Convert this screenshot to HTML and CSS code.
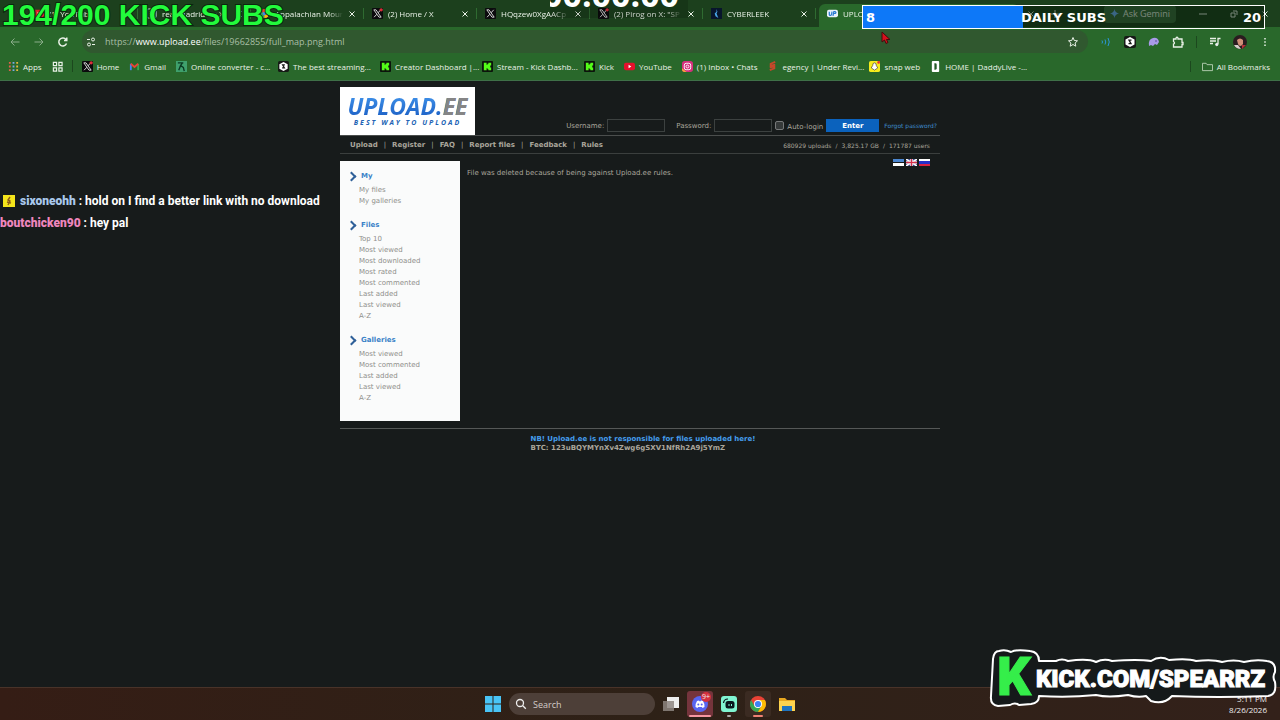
FILE: index.html
```html
<!DOCTYPE html>
<html lang="en">
<head>
    <meta charset="UTF-8">
    <meta name="viewport" content="width=device-width, initial-scale=1.0">
    <title>UPLOAD.EE - Best way to upload</title>
    <link rel="stylesheet" href="styles.css">
</head>
<body>
    <!-- shared icons -->
    <svg class="defs" width="0" height="0">
        <symbol id="x-logo" viewBox="0 0 12 12">
            <rect width="12" height="12" rx="1" fill="#0b0b0d"/>
            <path d="M2 2h2.4l5.6 8H7.600z" fill="none" stroke="#ddd" stroke-width="1"/>
            <path d="M9.500 2L6.600 5.300M5.300 6.800L2.300 10" stroke="#ddd" stroke-width="1"/>
        </symbol>
        <symbol id="x-new" viewBox="0 0 12 12">
            <use href="#x-logo"/>
            <circle cx="10" cy="2" r="1.800" fill="#d9303a"/>
        </symbol>
        <symbol id="kick" viewBox="0 0 12 12">
            <rect width="12" height="12" rx="1" fill="#0c140c"/>
            <path d="M2 2h3v2h1V3h1V2h3v3H9v1H8v0h1v1h1v3H7V9H6V8H5v2H2z" fill="#53fc18"/>
        </symbol>
        <symbol id="gem" viewBox="0 0 12 12">
            <rect width="12" height="12" rx="2" fill="#161a16" stroke="none"/>
            <path d="M6 1l4.500 2.500v5L6 11 1.500 8.500v-5z" fill="#fff" stroke="none"/>
            <path d="M7.500 4.200H5l2 3.400H4.500" fill="none" stroke="#161a16" stroke-width="1.300"/>
        </symbol>
        <symbol id="close" viewBox="0 0 8 8">
            <path d="M1.500 1.500l5 5M6.500 1.500l-5 5" stroke="currentColor" fill="none"/>
        </symbol>
    </svg>

    <header class="browser">
        <div class="tabs">
            <div class="tab">
                <svg class="icon" viewBox="0 0 12 12"><rect y="2" width="12" height="8" rx="2" fill="#e0202c"/><path d="M5 4l3 2-3 2z" fill="#fff"/></svg>
                <span>(1) YouTube</span>
            </div>
            <div class="tab">
                <svg class="icon" viewBox="0 0 12 12"><rect x="1" y="1" width="10" height="10" rx="2" fill="none" stroke="#ddd"/><path d="M4 4h4M4 6h4M4 8h2" stroke="#ddd"/></svg>
                <span>real madrid on X</span>
                <button aria-label="Close tab"><svg><use href="#close"/></svg></button>
            </div>
            <div class="tab">
                <svg class="icon" viewBox="0 0 12 12"><circle cx="6" cy="6" r="5" fill="#e94335"/><path d="M6 6L1.600 3.500A5 5 0 0 0 6 11z" fill="#34a853"/><path d="M6 6v5a5 5 0 0 0 5-5z" fill="#fbbc05"/><circle cx="6" cy="6" r="2" fill="#4285f4"/></svg>
                <span>Appalachian Moun</span>
                <button aria-label="Close tab"><svg><use href="#close"/></svg></button>
            </div>
            <div class="tab">
                <svg class="icon"><use href="#x-new"/></svg>
                <span>(2) Home / X</span>
                <button aria-label="Close tab"><svg><use href="#close"/></svg></button>
            </div>
            <div class="tab">
                <svg class="icon"><use href="#x-logo"/></svg>
                <span>HQqzew0XgAACp</span>
                <button aria-label="Close tab"><svg><use href="#close"/></svg></button>
            </div>
            <div class="tab">
                <svg class="icon"><use href="#x-new"/></svg>
                <span>(2) Pirog on X: "SP</span>
                <button aria-label="Close tab"><svg><use href="#close"/></svg></button>
            </div>
            <div class="tab">
                <svg class="icon" viewBox="0 0 12 12"><rect width="12" height="12" fill="#08152c"/><path d="M6 1l1 3-1 2 2 5-3-2-1-3 2-2z" fill="#49a6e8"/></svg>
                <span>CYBERLEEK</span>
                <button aria-label="Close tab"><svg><use href="#close"/></svg></button>
            </div>
            <div class="tab active">
                <svg class="icon" viewBox="0 0 12 12"><rect y="2" width="12" height="8" rx="2" fill="#e9f1fa"/><path d="M2.500 4v3q0 1 1 1t1.500-1l.5-3M6.500 8.500l1-4.500h1.500q1.500 1 0 2H7.500" fill="none" stroke="#2477d2" stroke-width="1.300"/></svg>
                <span>UPLOAD.EE</span>
            </div>
            <div class="tab-end">
                <button aria-label="Close tab"><svg><use href="#close"/></svg></button>
                <button aria-label="New tab"><svg viewBox="0 0 8 8"><path d="M4 0v8M0 4h8" stroke="currentColor"/></svg></button>
            </div>
            <div class="window-controls">
                <button class="gemini"><svg class="icon" viewBox="0 0 12 12"><path d="M6 0q.8 5.200 6 6-5.200.8-6 6-.8-5.200-6-6 5.200-.8 6-6z" fill="#6fb0ff"/></svg>Ask Gemini</button>
                <button aria-label="Minimize"><svg viewBox="0 0 8 8"><path d="M0 4h8" stroke="currentColor"/></svg></button>
                <button aria-label="Restore"><svg viewBox="0 0 8 8"><path d="M1 3h4v4H1zM3 1h4v4" fill="none" stroke="currentColor"/></svg></button>
                <button aria-label="Close"><svg><use href="#close"/></svg></button>
            </div>
        </div>

        <div class="toolbar">
            <button class="dim" aria-label="Back"><svg viewBox="0 0 12 12"><path d="M10.500 6H2M5.500 2.500L2 6l3.500 3.500"/></svg></button>
            <button class="dim" aria-label="Forward"><svg viewBox="0 0 12 12"><path d="M1.500 6H10M6.500 2.500L10 6 6.500 9.500"/></svg></button>
            <button aria-label="Reload"><svg viewBox="0 0 12 12"><path d="M9.500 7.500A4 4 0 1 1 9 3.500M9.800 1.500V4.500H7" stroke-width="1.500"/></svg></button>
            <div class="address">
                <svg class="site-info" viewBox="0 0 12 12"><path d="M2 3.500h3M7 8.500h3"/><circle cx="8" cy="3.500" r="1.500"/><circle cx="4" cy="8.500" r="1.500"/></svg>
                <div class="url">https://<b>www.upload.ee</b>/files/19662855/full_map.png.html</div>
                <svg viewBox="0 0 12 12"><path d="M6 1.500l1.300 3 3.200.3L8.100 7l.7 3.200L6 8.500l-2.800 1.700.7-3.200L1.500 4.800l3.200-.3z"/></svg>
            </div>
            <div class="extensions">
                <svg viewBox="0 0 12 12" class="blue"><path d="M2 4.500q1 1.500 0 3M5 3.500q1.500 2.500 0 5M8 2q2.500 4 0 8"/></svg>
                <svg><use href="#gem"/></svg>
                <svg viewBox="0 0 12 12"><path d="M1 10Q0 3 5 2q5-1 6 4l-2 3-2-1-2 2-2-1z" fill="#a99be8" stroke="none"/><path d="M7 5h2" stroke="#5b4aa0"/></svg>
                <svg viewBox="0 0 12 12"><path d="M1.500 3H4V2q1-1.500 2 0v1h4v3.500h1v2h-1v2.500H1.500V8q2-1 0-2.500z" stroke-width="1.300"/></svg>
                <i></i>
                <svg viewBox="0 0 12 12"><path d="M1 2.500h6M1 5h6M1 7.500h3M9 8V2.500h2.500" stroke-width="1.300"/><circle cx="7.800" cy="8.500" r="1.200" fill="#eef"/></svg>
                <svg class="avatar" viewBox="0 0 14 14"><circle cx="7" cy="7" r="7" fill="#2a1c20"/><path d="M4 5q3-3 6 0v4q-3 4-5 0z" fill="#cf9078"/><path d="M1 10l4 0 3 4q-5 0-7-4z" fill="#d8d0cc"/><path d="M9 10l4 0-4 4z" fill="#b4323a"/></svg>
                <svg viewBox="0 0 12 12"><path d="M6 2v1.500M6 5.300v1.500M6 8.600v1.500" stroke-width="1.500"/></svg>
            </div>
        </div>

        <nav class="bookmarks">
            <a href="#"><svg viewBox="0 0 12 12"><path d="M1 2h2M1 6h2M1 10h2" stroke="#e5604b" stroke-width="2"/><path d="M5 2h2M5 6h2M5 10h2" stroke="#77a9e8" stroke-width="2"/><path d="M9 2h2M9 6h2M9 10h2" stroke="#e7b73c" stroke-width="2"/></svg>Apps</a>
            <a href="#" aria-label="Tab groups"><svg viewBox="0 0 12 12"><path d="M1.500 1.500h3.500v3.500H1.500zM7.500 1.500h3.500v3.500H7.500zM1.500 7.500h3.500v3.500H1.500zM7.500 7.500h3.500v3.500H7.500z" fill="none" stroke="#e9f1e7" stroke-width="1.300"/></svg></a>
            <i></i>
            <a href="#"><svg><use href="#x-new"/></svg>Home</a>
            <a href="#"><svg viewBox="0 0 12 12"><path d="M2 10V3" stroke="#4285f4" stroke-width="2"/><path d="M10 10V3" stroke="#34a853" stroke-width="2"/><path d="M2 3l4 3.500L10 3" fill="none" stroke="#ea4335" stroke-width="2"/></svg>Gmail</a>
            <a href="#" class="long"><svg viewBox="0 0 12 12"><rect width="12" height="12" fill="#3fa06c"/><path d="M2 2h6M7 2L5 5l3 2 1 4M5 5l-2 5" fill="none" stroke="#0b3a22" stroke-width="1.500"/></svg>Online converter - c...</a>
            <a href="#" class="long"><svg><use href="#gem"/></svg>The best streaming...</a>
            <a href="#" class="long"><svg><use href="#kick"/></svg>Creator Dashboard |...</a>
            <a href="#" class="long"><svg><use href="#kick"/></svg>Stream - Kick Dashb...</a>
            <a href="#"><svg><use href="#kick"/></svg>Kick</a>
            <a href="#"><svg viewBox="0 0 12 12"><rect y="2" width="12" height="8" rx="2" fill="#e5102c"/><path d="M5 4l3 2-3 2z" fill="#fff"/></svg>YouTube</a>
            <a href="#"><svg viewBox="0 0 12 12"><rect width="12" height="12" rx="3" fill="#d52f7c"/><path d="M0 8l5 4H3q-3 0-3-3z" fill="#f9a63a"/><rect x="2.500" y="2.500" width="7" height="7" rx="2" fill="none" stroke="#fff"/><circle cx="6" cy="6" r="1.600" fill="none" stroke="#fff"/></svg>(1) Inbox • Chats</a>
            <a href="#" class="long"><svg viewBox="0 0 12 12"><path d="M9 1L4 3v2l5-1M3 7l5-1v2L3 10" fill="none" stroke="#c5472a" stroke-width="2"/></svg>egency | Under Revi...</a>
            <a href="#"><svg viewBox="0 0 12 12"><rect width="12" height="12" rx="2" fill="#f6ec1c"/><path d="M6 2q2 0 2 3l1.500 2.500L6 10 2.500 7.500 4 5q0-3 2-3z" fill="#fff" stroke="#333" stroke-width=".7"/><circle cx="10.500" cy="1.500" r="1.500" fill="#e33"/></svg>snap web</a>
            <a href="#"><svg viewBox="0 0 12 12"><rect x="2" y="0" width="8" height="12" rx="1" fill="#fff"/><path d="M4.800 2.500v7h1q1.500 0 1.500-1.500V4q0-1.500-1.500-1.500z" fill="#245c27"/></svg>HOME | DaddyLive -...</a>
            <a href="#" class="all"><svg viewBox="0 0 12 12"><path d="M.5 10.500v-8h4l1 1.500h6v6.500z" fill="none" stroke="#b9d0b6"/></svg>All Bookmarks</a>
        </nav>
    </header>

    <main class="site">
        <div class="top">
            <a href="#" class="logo">
                <span class="name">UPLOAD.<em>EE</em></span>
                <span class="slogan">BEST WAY TO UPLOAD</span>
            </a>
            <form class="login">
                <label for="user">Username:</label>
                <input type="text" id="user">
                <label for="pass" class="pass">Password:</label>
                <input type="password" id="pass">
                <input type="checkbox" id="auto">
                <label for="auto" class="auto">Auto-login</label>
                <button type="button">Enter</button>
                <a href="#">Forgot password?</a>
            </form>
        </div>
        <div class="menu">
            <nav>
                <a href="#">Upload</a><span>|</span><a href="#">Register</a><span>|</span><a href="#">FAQ</a><span>|</span><a href="#">Report files</a><span>|</span><a href="#">Feedback</a><span>|</span><a href="#">Rules</a>
            </nav>
            <div class="stats"><span>680929 uploads</span><span>/</span><span>3,825.17 GB</span><span>/</span><span>171787 users</span></div>
        </div>

        <div class="columns">
            <aside>
                <h2>My</h2>
                <ul>
                    <li><a href="#">My files</a></li>
                    <li><a href="#">My galleries</a></li>
                </ul>
                <h2>Files</h2>
                <ul>
                    <li><a href="#">Top 10</a></li>
                    <li><a href="#">Most viewed</a></li>
                    <li><a href="#">Most downloaded</a></li>
                    <li><a href="#">Most rated</a></li>
                    <li><a href="#">Most commented</a></li>
                    <li><a href="#">Last added</a></li>
                    <li><a href="#">Last viewed</a></li>
                    <li><a href="#">A-Z</a></li>
                </ul>
                <h2>Galleries</h2>
                <ul>
                    <li><a href="#">Most viewed</a></li>
                    <li><a href="#">Most commented</a></li>
                    <li><a href="#">Last added</a></li>
                    <li><a href="#">Last viewed</a></li>
                    <li><a href="#">A-Z</a></li>
                </ul>
            </aside>
            <p class="message">File was deleted because of being against Upload.ee rules.</p>
            <div class="flags">
                <svg viewBox="0 0 11 7"><rect width="11" height="7" fill="#fff"/><rect width="11" height="4" fill="#171b1b"/><rect width="11" height="3" fill="#4b86d0"/></svg>
                <svg viewBox="0 0 11 7"><rect width="11" height="7" fill="#3c4a8c"/><path d="M0 0l11 7M11 0L0 7" stroke="#fff" stroke-width="1.500"/><path d="M5.500 0v7M0 3.500h11" stroke="#fff" stroke-width="2.500"/><path d="M5.500 0v7M0 3.500h11" stroke="#d3304b" stroke-width="1.300"/></svg>
                <svg viewBox="0 0 11 7"><rect width="11" height="7" fill="#fff"/><rect y="2" width="11" height="3" fill="#2530c8"/><rect y="5" width="11" height="2" fill="#d92240"/></svg>
            </div>
        </div>

        <footer>
            <div>
                <a href="#">NB! Upload.ee is not responsible for files uploaded here!</a>
                <p>BTC: 123uBQYMYnXv4Zwg6gSXV1NfRh2A9j5YmZ</p>
            </div>
        </footer>
    </main>

    <div class="taskbar">
        <button aria-label="Start"><svg viewBox="0 0 16 16"><path d="M0 0h7.500v7.500H0zM8.500 0H16v7.500H8.500zM0 8.500h7.500V16H0zM8.500 8.500H16V16H8.500z" fill="#49c4f6"/></svg></button>
        <div class="search">
            <svg viewBox="0 0 12 12"><circle cx="5" cy="5" r="3.500" fill="none" stroke="#eee" stroke-width="1.300"/><path d="M7.800 7.800l3 3" stroke="#eee" stroke-width="1.300"/></svg>
            <input type="text" placeholder="Search" aria-label="Search">
        </div>
        <button aria-label="Task view"><svg viewBox="0 0 16 16"><rect x="4" y="1" width="12" height="11" fill="#eee"/><rect x="0" y="5" width="11" height="10" fill="#8d8580" opacity=".85"/></svg></button>
        <button class="app discord" aria-label="Discord">
            <svg viewBox="0 0 16 16"><circle cx="8" cy="8" r="8" fill="#5865f2"/><path d="M3.500 11Q3.500 7 5 5l2-.5.3.7h1.400L9 4.500l2 .5q1.500 2 1.500 6L10.500 12l-.7-1H6.200l-.7 1z" fill="#fff"/><circle cx="6.300" cy="8.500" r="1" fill="#5865f2"/><circle cx="9.700" cy="8.500" r="1" fill="#5865f2"/></svg>
            <span class="badge">9+</span>
        </button>
        <button class="app quiet" aria-label="Streamlabs"><svg viewBox="0 0 16 16"><rect width="16" height="16" rx="3" fill="#80f5d2"/><path d="M2.500 7Q3 3 7 3" fill="none" stroke="#09161d" stroke-width="1.200"/><rect x="4.500" y="5" width="9" height="7.500" rx="2.500" fill="#09161d"/><path d="M8 8v2M10.500 8v2" stroke="#80f5d2"/></svg></button>
        <button class="app" aria-label="Chrome"><svg viewBox="0 0 16 16"><circle cx="8" cy="8" r="8" fill="#e94235"/><path d="M1.070 4A8 8 0 0 0 8 16l3.500-6H8L4.500 10z" fill="#34a853"/><path d="M8 16A8 8 0 0 0 14.900 4H8l3.500 6z" fill="#fbbc05"/><circle cx="8" cy="8" r="4" fill="#fff"/><circle cx="8" cy="8" r="3.100" fill="#3f83f4"/></svg></button>
        <button aria-label="Explorer"><svg viewBox="0 0 16 16"><path d="M0 2h6l2 2h8v11H0z" fill="#e9a820"/><path d="M0 5h16v10H0z" fill="#fdd34f"/><path d="M3 10h10v5H3z" fill="#1f74c0"/></svg></button>
        <div class="clock"><span>5:11 PM</span><span>8/26/2026</span></div>
    </div>

    <!-- stream overlays -->
    <div class="sub-goal">194/200 KICK SUBS</div>
    <div class="timer">00:00:00</div>
    <div class="daily">
        <div class="fill"></div>
        <span>8</span><span>DAILY SUBS</span><span>20</span>
    </div>
    <svg class="cursor" viewBox="0 0 10 14"><path d="M1 1v10l2.500-2L5 12.500l2-1L5.500 8.500H9z" fill="#d4101c" stroke="#470a0c"/></svg>
    <div class="chat">
        <p><svg viewBox="0 0 12 12"><rect width="12" height="12" fill="#f5e51b"/><path d="M7 2L5 5l2 1-2 4M4 7l4 1" fill="none" stroke="#8c5a18" stroke-width="1.400"/></svg><b class="six">sixoneohh</b> : hold on I find a better link with no download</p>
        <p><b class="chicken">boutchicken90</b> : hey pal</p>
    </div>
    <svg class="kick-banner" viewBox="0 0 290 60">
        <path d="M11 3Q17 1 23 4Q28 1 42 3Q51 4 51 13H68Q74 10 80 13Q100 10 108 14Q116 10 124 13Q150 11 163 13Q172 7 181 12Q200 10 208 13Q225 11 234 14Q246 11 256 14Q268 11 279 13Q288 14 287 24Q284 29 287 34Q289 47 280 48Q230 50 184 48Q176 57 163 53L158 48Q150 50 140 47Q120 50 108 47Q80 50 51 48Q51 55 43 56L31 57Q27 54 22 57L10 58Q2 57 3 48L5 11Q6 3 11 3Z" fill="#15191a" stroke="#fff" stroke-width="2" stroke-linejoin="round"/>
        <text class="big-k" x="9" y="47">K</text>
        <text class="address-text" x="48" y="39">KICK.COM/SPEARRZ</text>
    </svg>
</body>
</html>
```

FILE: styles.css
```css
* {
    box-sizing: border-box;
}

body {
    margin: 0;
    min-height: 100vh;
    display: flex;
    flex-direction: column;
    position: relative;
    overflow: hidden;
    background-color: #171b1b;
    color: #aaa69c;
    font-family: "DejaVu Sans", Verdana, sans-serif;
    font-size: 7px;
}

a {
    color: inherit;
    text-decoration: none;
}

button {
    border: 0;
    padding: 0;
    background: none;
    color: inherit;
    font: inherit;
}

svg {
    display: block;
    flex: none;
}

.defs {
    position: absolute;
}

p, h2, ul {
    margin: 0;
    padding: 0;
}

/* browser */
.browser {
    background-color: #29682b;
    border-bottom: 1px solid #3f7048;
    color: #e9f1e7;
    font-family: "Open Sans", "Segoe UI", sans-serif;
    font-size: 8px;
}

.tabs {
    display: flex;
    height: 27px;
    padding-left: 25px;
    background-color: #1c401d;
}

.tab {
    display: flex;
    align-items: center;
    gap: 5px;
    width: 113px;
    padding: 0 8px;
    background: linear-gradient(#2f6b31, #2f6b31) right center / 1px 11px no-repeat;
}

.tab span {
    flex: 1;
    overflow: hidden;
    white-space: nowrap;
    -webkit-mask-image: linear-gradient(to right, #000 80%, transparent);
    mask-image: linear-gradient(to right, #000 80%, transparent);
}

.tab.active {
    width: 200px;
    margin: 4px 0 0 3px;
    padding-bottom: 4px;
    border-radius: 6px 6px 0 0;
    background: #29682b;
}

.icon, .bookmarks svg {
    width: 11px;
    height: 11px;
}

.tabs button svg {
    width: 8px;
    height: 8px;
}

.tabs .gemini svg {
    width: 9px;
    height: 9px;
}

.tab-end {
    display: flex;
    align-items: center;
    gap: 16px;
    margin-left: 8px;
}

.window-controls {
    display: flex;
    align-items: center;
    gap: 23px;
    margin-left: auto;
    padding-right: 11px;
}

.tabs .gemini {
    display: flex;
    align-items: center;
    gap: 4px;
    height: 18px;
    padding: 0 6px;
    border-radius: 4px;
    background-color: #3b6b3c;
    font-size: 9px;
}

.toolbar {
    display: flex;
    align-items: center;
    gap: 12px;
    height: 29px;
    padding-left: 9px;
}

.toolbar svg {
    width: 12px;
    height: 12px;
    fill: none;
    stroke: #e9f1e7;
}

.toolbar .dim {
    opacity: 0.5;
}

.address {
    flex: 1;
    display: flex;
    align-items: center;
    gap: 8px;
    height: 23px;
    margin-left: 1px;
    padding: 0 9px 0 3px;
    border-radius: 12px;
    background-color: #30582f;
}

.url {
    flex: 1;
    color: #a9bfa6;
    font-size: 9px;
}

.url b {
    color: #fff;
    font-weight: normal;
}

.extensions {
    display: flex;
    align-items: center;
    gap: 12px;
    padding-right: 9px;
}

.extensions .blue {
    stroke: #2998d8;
}

.extensions .avatar {
    width: 14px;
    height: 14px;
    stroke: none;
}

.extensions i, .bookmarks i {
    width: 1px;
    height: 12px;
    background-color: #1c481e;
}

.bookmarks {
    display: flex;
    align-items: center;
    height: 24px;
    padding: 0 10px 4px 8px;
    gap: 10px;
}

.bookmarks i {
    margin: 0 -1px;
}

.bookmarks a {
    display: flex;
    align-items: center;
    gap: 4px;
    white-space: nowrap;
}

.bookmarks .long {
    width: 92px;
}

.bookmarks .all {
    margin-left: auto;
    padding-left: 11px;
    border-left: 1px solid #1c481e;
}

/* upload.ee */
.site {
    flex: 1;
    width: 100%;
    max-width: 600px;
    margin: 0 auto;
    padding-top: 6px;
}

.top {
    display: flex;
    justify-content: space-between;
    align-items: flex-end;
}

.logo {
    display: flex;
    flex-direction: column;
    align-items: center;
    justify-content: center;
    width: 135px;
    height: 48px;
    background-color: #fff;
    color: #2163b4;
    font-family: "Open Sans", sans-serif;
    font-style: italic;
    font-weight: bold;
    white-space: nowrap;
}

.name {
    font-size: 23px;
    line-height: 23px;
    background: linear-gradient(#3f92ea, #1c5fc4);
    -webkit-background-clip: text;
    background-clip: text;
    color: transparent;
}

.name em {
    color: #858585;
}

.slogan {
    font-size: 7px;
    line-height: 9px;
    letter-spacing: 2px;
}

.login {
    display: flex;
    align-items: center;
    padding: 0 3px 3px 0;
}

.login input {
    width: 58px;
    height: 13px;
    margin: 0 0 0 3px;
    border: 1px solid #3c4140;
    background: none;
    color: inherit;
    font: inherit;
}

.login .pass {
    margin-left: 11px;
}

.login input[type="checkbox"] {
    appearance: none;
    width: 9px;
    height: 9px;
    border: 1px solid #77797a;
    border-radius: 2px;
    background-color: #363a3a;
}

.login .auto {
    margin: 2px 3px 0 3px;
}

.login button {
    width: 53px;
    height: 13px;
    background-color: #0b62bd;
    color: #fff;
    font-weight: bold;
}

.login a {
    margin-left: 5px;
    color: #3f8dcc;
    font-size: 6px;
}

.menu {
    display: flex;
    justify-content: space-between;
    align-items: center;
    height: 19px;
    margin-bottom: 7px;
    padding: 1px 10px 0;
    border-top: 1px solid #4b4e4d;
    border-bottom: 1px solid #3b3f3e;
}

.menu nav {
    display: flex;
    gap: 6px;
    font-weight: bold;
}

.menu nav span {
    font-weight: normal;
}

.stats {
    display: flex;
    gap: 4px;
    font-size: 6px;
}

.columns {
    display: flex;
    align-items: flex-start;
}

aside {
    width: 120px;
    padding: 7px 0 17px 19px;
    background-color: #fafbfb;
    color: #8f8f8b;
}

aside h2 {
    display: flex;
    align-items: center;
    height: 16px;
    color: #3b82c8;
    font-size: 7px;
}

aside h2::before {
    content: "";
    width: 5px;
    height: 5px;
    margin: 0 6px 0 -11px;
    border: solid #2f6099;
    border-width: 2px 2px 0 0;
    transform: rotate(45deg);
}

aside ul {
    list-style: none;
    padding-top: 1px;
    margin-bottom: 10px;
}

aside ul:last-child {
    margin-bottom: 0;
}

aside li {
    line-height: 11px;
}

.message {
    flex: 1;
    padding: 8px 0 0 7px;
}

.flags {
    display: flex;
    gap: 2px;
    padding-right: 10px;
}

.flags svg {
    width: 11px;
    height: 7px;
    margin-top: -2px;
}

footer {
    display: flex;
    justify-content: center;
    margin-top: 7px;
    padding: 6px 0 0 6px;
    border-top: 1px solid #555857;
    font-weight: bold;
    line-height: 9px;
}

footer a {
    color: #459eee;
}

/* taskbar */
.taskbar {
    display: flex;
    align-items: center;
    justify-content: center;
    gap: 8px;
    position: relative;
    height: 33px;
    border-top: 1px solid #493329;
    background: linear-gradient(to right, #351d15, #2e2117 50%, #33211a);
    color: #eee;
    font-family: "Open Sans", "Segoe UI", sans-serif;
    font-size: 9px;
}

.taskbar button svg {
    width: 16px;
    height: 16px;
}

.search {
    display: flex;
    align-items: center;
    gap: 6px;
    width: 146px;
    height: 22px;
    padding: 0 6px;
    border-radius: 11px;
    background-color: #4d3f38;
}

.search svg {
    width: 12px;
    height: 12px;
}

.search input {
    width: 100px;
    border: 0;
    padding: 0;
    background: none;
    color: #ddd;
    font: inherit;
}

.search input::placeholder {
    color: #d3ccc8;
}

.app {
    display: flex;
    align-items: center;
    justify-content: center;
    position: relative;
    width: 26px;
    height: 26px;
    border-radius: 3px;
    background-color: #3b2b22;
}

.app::after {
    content: "";
    position: absolute;
    bottom: 0;
    width: 10px;
    height: 2px;
    border-radius: 1px;
    background-color: #ef8274;
}

.discord {
    background-color: #75343c;
}

.discord::after {
    width: 22px;
    background-color: #f797a0;
}

.taskbar .quiet {
    width: 16px;
    background: none;
}

.quiet::after {
    width: 4px;
    background-color: #aaa;
}

.badge {
    position: absolute;
    top: 1px;
    right: 2px;
    width: 10px;
    height: 10px;
    border-radius: 5px;
    background-color: #d5303e;
    font-size: 7px;
    line-height: 10px;
}

.clock {
    display: flex;
    flex-direction: column;
    position: absolute;
    right: 13px;
    bottom: 5px;
    font-size: 8px;
    line-height: 11px;
    text-align: right;
}

/* overlays */
.sub-goal {
    position: absolute;
    top: -1px;
    left: 2px;
    color: #22fb3c;
    font: bold 30px/32px "Liberation Sans", Arial, sans-serif;
    -webkit-text-stroke: 2px #0a260c;
    paint-order: stroke fill;
    white-space: nowrap;
}

.timer {
    position: absolute;
    top: -30px;
    left: 550px;
    width: 138px;
    overflow: hidden;
    background-color: rgba(0, 0, 0, 0.15);
    color: #fff;
    font: bold 34px/48px "Open Sans", sans-serif;
    text-indent: -7px;
}

.daily {
    display: flex;
    align-items: center;
    position: absolute;
    top: 5px;
    right: 15px;
    width: 403px;
    height: 24px;
    padding: 0 3px;
    border: 1px solid #fff;
    background-color: rgba(5, 25, 10, 0.5);
    color: #fff;
    font-size: 13px;
    font-weight: bold;
}

.daily .fill {
    position: absolute;
    top: 0;
    bottom: 0;
    left: 0;
    width: 40%;
    background-color: #0d78f8;
}

.daily span {
    flex: 1;
    position: relative;
    text-align: center;
}

.daily span:nth-of-type(1) {
    text-align: left;
}

.daily span:nth-of-type(3) {
    text-align: right;
}

.cursor {
    position: absolute;
    top: 31px;
    left: 881px;
    width: 10px;
    height: 14px;
}

.chat {
    position: absolute;
    top: 190px;
    left: 0;
    color: #fff;
    font: bold 12px/22px Roboto, sans-serif;
    white-space: nowrap;
}

.chat p {
    display: flex;
    align-items: center;
    white-space: pre;
}

.chat svg {
    width: 12px;
    height: 12px;
    margin: 0 5px 0 3px;
}

.six {
    color: #a9c8ec;
}

.chicken {
    color: #ee86bd;
}

.kick-banner {
    position: absolute;
    right: 2px;
    bottom: 12px;
    width: 290px;
    height: 60px;
}

.kick-banner text {
    fill: #fff;
    stroke: #fff;
    font: 900 24px Roboto, sans-serif;
}

.kick-banner .big-k {
    fill: #35ee4a;
    stroke: #35ee4a;
    font-size: 53px;
}
```
